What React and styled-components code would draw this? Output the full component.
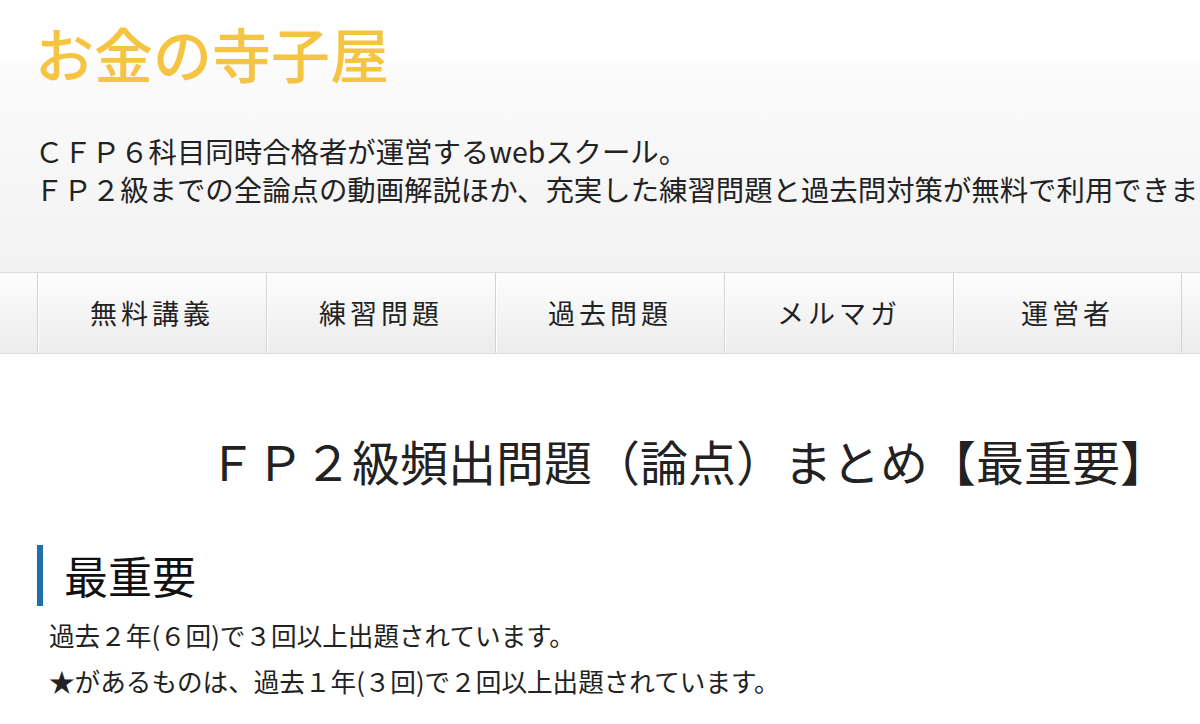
import React from 'react'
import styled, { createGlobalStyle } from 'styled-components'

const GlobalStyle = createGlobalStyle`
  html, body {
    margin: 0;
    padding: 0;
    background: #fff;
    overflow: hidden;
  }
  body {
    font-family: "Noto Sans CJK JP", "Noto Sans", sans-serif;
    color: #222;
  }
`

const menu = ['無料講義', '練習問題', '過去問題', 'メルマガ', '運営者']

const Page = styled.div`
  width: 1200px;
  overflow: hidden;
`

const Header = styled.header`
  height: 272px;
  box-sizing: border-box;
  padding: 23px 0 0 35px;
  background: linear-gradient(#fff 0, #fff 60px, #fbfbfb 66px, #f2f2f2 100%);
`

const Logo = styled.h1`
  margin: 0;
  font-size: 59px;
  line-height: 59px;
  font-weight: 500;
  color: #f5c443;
`

const Tagline = styled.p`
  margin: 50px 0 0 0;
  font-size: 28.4px;
  line-height: 38px;
  white-space: nowrap;
  color: #222;
`

const Nav = styled.nav`
  display: flex;
  height: 82px;
  box-sizing: border-box;
  padding-left: 37px;
  border-top: 1px solid #dcdcdc;
  border-bottom: 1px solid #dcdcdc;
  background: linear-gradient(#fdfdfd, #ececec);
  white-space: nowrap;
`

const NavItem = styled.a`
  flex: 0 0 229px;
  box-sizing: border-box;
  border-left: 1px solid #d3d3d3;
  box-shadow: inset 1px 0 #fff;
  text-align: center;
  font-size: 27px;
  line-height: 80px;
  letter-spacing: 4px;
  color: #222;
  text-decoration: none;

  &:last-child {
    border-right: 1px solid #d3d3d3;
  }
`

const Title = styled.h1`
  margin: 75px 0 0;
  padding-left: 208px;
  font-size: 48px;
  line-height: 62px;
  font-weight: 400;
  white-space: nowrap;
  color: #222;
`

const Section = styled.h2`
  margin: 54px 0 0 37px;
  padding-left: 21px;
  border-left: 6px solid #1f6fac;
  font-size: 44px;
  line-height: 61px;
  font-weight: 400;
  color: #111;
`

const Notes = styled.div`
  margin-top: 6px;
`

const Note = styled.p`
  margin: 0;
  padding-left: 49px;
  font-size: 25.6px;
  line-height: 46px;
  white-space: nowrap;
  color: #222;
`

export default function App() {
  return (
    <Page>
      <GlobalStyle />
      <Header>
        <Logo>お金の寺子屋</Logo>
        <Tagline>
          ＣＦＰ６科目同時合格者が運営するwebスクール。
          <br />
          ＦＰ２級までの全論点の動画解説ほか、充実した練習問題と過去問対策が無料で利用できます。
        </Tagline>
      </Header>
      <Nav>
        {menu.map((m) => (
          <NavItem key={m} href="#">{m}</NavItem>
        ))}
      </Nav>
      <Title>ＦＰ２級頻出問題（論点）まとめ【最重要】</Title>
      <Section>最重要</Section>
      <Notes>
        <Note>過去２年(６回)で３回以上出題されています。</Note>
        <Note>★があるものは、過去１年(３回)で２回以上出題されています。</Note>
      </Notes>
    </Page>
  )
}
